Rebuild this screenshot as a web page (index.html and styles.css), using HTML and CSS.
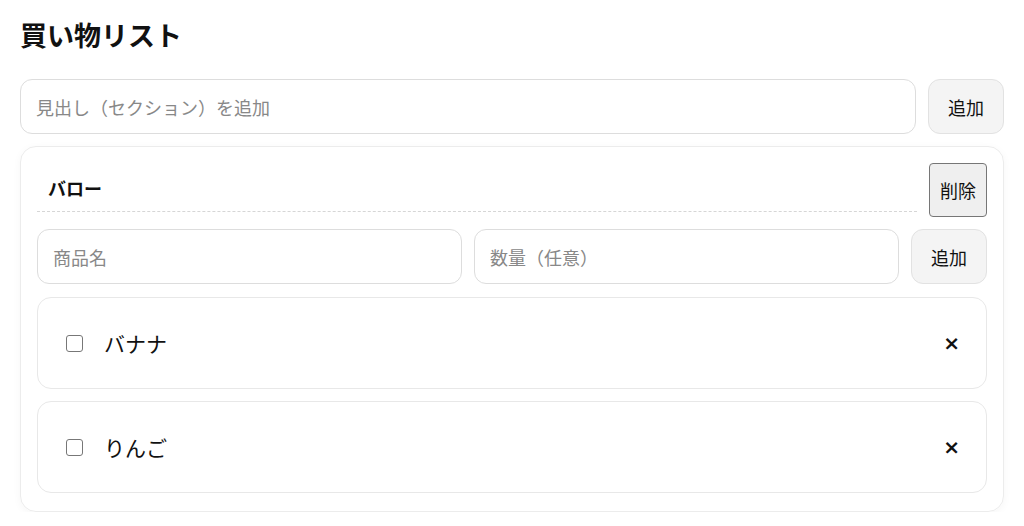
FILE: index.html
```html
<!DOCTYPE html>
<html lang="ja">
<head>
  <meta charset="UTF-8">
  <meta name="viewport" content="width=device-width, initial-scale=1.0">
  <title>買い物リスト</title>
  <link rel="stylesheet" href="styles.css">
</head>
<body>
  <h1>買い物リスト</h1>

  <form class="row" onsubmit="return false">
    <input class="field" type="text" placeholder="見出し（セクション）を追加">
    <button class="add-btn" type="submit">追加</button>
  </form>

  <section class="card">
    <div class="section-head">
      <h2 class="section-title">バロー</h2>
      <button class="del-btn" type="button">削除</button>
    </div>

    <form class="row" onsubmit="return false">
      <input class="field" type="text" placeholder="商品名">
      <input class="field" type="text" placeholder="数量（任意）">
      <button class="add-btn" type="submit">追加</button>
    </form>

    <ul class="items">
      <li class="item">
        <input class="check" type="checkbox">
        <span class="item-name">バナナ</span>
        <button class="remove" type="button">×</button>
      </li>
      <li class="item">
        <input class="check" type="checkbox">
        <span class="item-name">りんご</span>
        <button class="remove" type="button">×</button>
      </li>
    </ul>
  </section>
</body>
</html>
```

FILE: styles.css
```css
body {
  margin: 0;
  padding: 0 20px;
  font-family: "Noto Sans CJK JP", "Noto Sans", sans-serif;
  font-size: 18px;
  color: #111;
  background: #fff;
}
h1 {
  font-size: 27px;
  line-height: 36px;
  font-weight: 700;
  margin: 17px 0 26px;
}
.row {
  display: flex;
  gap: 12px;
  margin: 0 0 12px;
}
.field {
  flex: 1;
  min-width: 0;
  height: 55px;
  box-sizing: border-box;
  padding: 0 15px;
  border: 1px solid #ddd;
  border-radius: 12px;
  font: inherit;
  color: #111;
  background: #fff;
}
.field::placeholder {
  color: #888;
}
.add-btn {
  width: 76px;
  height: 55px;
  border: 1px solid #e2e2e2;
  border-radius: 12px;
  background: #f4f4f4;
  font: inherit;
  color: #111;
}
.card {
  border: 1px solid #ececec;
  border-radius: 16px;
  padding: 16px 16px 18px;
  box-shadow: 0 2px 8px rgba(0, 0, 0, 0.04);
}
.section-head {
  display: flex;
  gap: 12px;
  margin-bottom: 12px;
}
.section-title {
  flex: 1;
  display: flex;
  align-items: center;
  margin: 0 0 5px;
  padding: 2px 11px 0;
  font-size: 18px;
  font-weight: 700;
  border-bottom: 1px dashed #d6d6d6;
}
.del-btn {
  width: 58px;
  height: 54px;
  padding: 0;
  border: 1px solid #767676;
  border-radius: 4px;
  background: #efefef;
  font: inherit;
  color: #111;
}
.card .row {
  margin-bottom: 13px;
}
.items {
  list-style: none;
  margin: 0;
  padding: 0;
  display: flex;
  flex-direction: column;
  gap: 12px;
}
.item {
  display: flex;
  align-items: center;
  height: 92px;
  box-sizing: border-box;
  padding: 0 26px 0 28px;
  border: 1px solid #e8e8e8;
  border-radius: 14px;
}
.check {
  width: 17px;
  height: 17px;
  margin: 0 21px 0 0;
  appearance: none;
  border: 1px solid #777;
  border-radius: 3px;
  background: #fff;
}
.item-name {
  flex: 1;
  font-size: 21px;
}
.remove {
  border: none;
  background: none;
  padding: 0;
  font-family: "DejaVu Sans", sans-serif;
  font-size: 20px;
  font-weight: 700;
  color: #111;
}
```
